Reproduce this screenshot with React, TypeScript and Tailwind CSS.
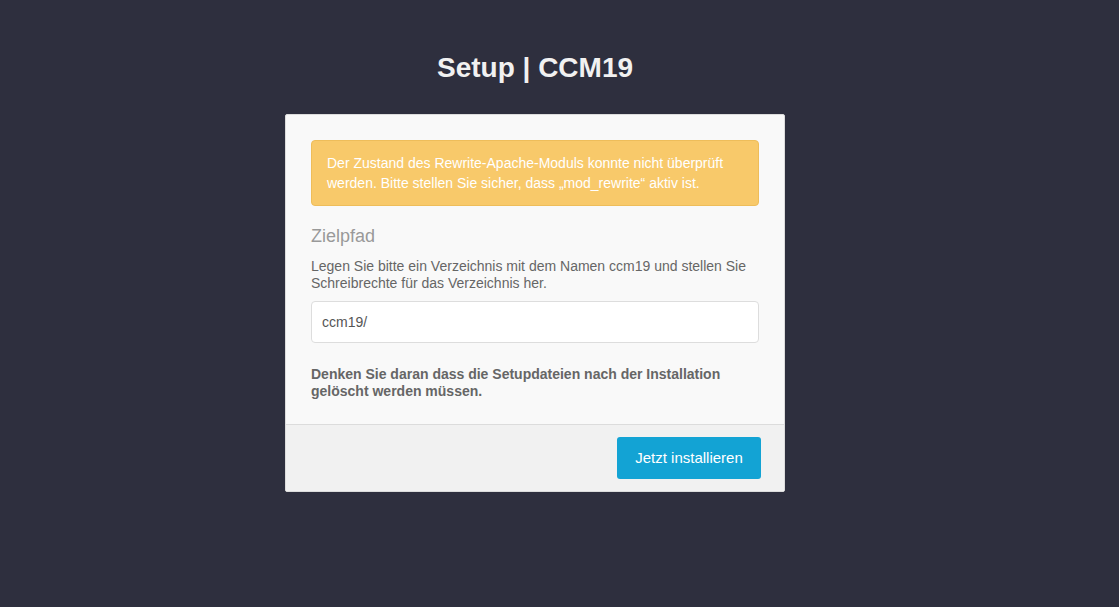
const App = () => {
  return (
    <div
      className="min-h-[607px] w-full bg-[#2e2f3e] text-[14px] text-[#666]"
      style={{ fontFamily: '"Liberation Sans", Arial, sans-serif' }}
    >
      <div className="flex w-[1070px] flex-col items-center pt-[50px]">
        <h1 className="text-[28px] font-bold leading-[36px] text-[#f1f1f1]">
          Setup | CCM19
        </h1>

        <div className="mt-[28px] w-[500px] rounded-[2px] border border-[#dcdcdc] bg-[#f9f9f9]">
          <div className="px-[25px] pt-[25px] pb-[24px]">
            <div className="rounded-[4px] border border-[#eebd5a] bg-[#f8c96a] px-[15px] pt-[12px] pb-[12px] leading-[20px] text-white">
              Der Zustand des Rewrite-Apache-Moduls konnte nicht überprüft
              werden. Bitte stellen Sie sicher, dass „mod_rewrite“ aktiv ist.
            </div>

            <h2 className="mt-[18px] text-[18px] leading-[24px] text-[#999]">
              Zielpfad
            </h2>
            <p className="mt-[10px] leading-[17px] text-[#666]">
              Legen Sie bitte ein Verzeichnis mit dem Namen ccm19 und stellen Sie
              Schreibrechte für das Verzeichnis her.
            </p>
            <input
              type="text"
              defaultValue="ccm19/"
              className="mt-[9px] block h-[42px] w-full rounded-[4px] border border-[#dddddd] bg-white px-[10px] text-[14px] text-[#555] outline-none"
            />

            <p className="mt-[23px] font-bold leading-[17px] text-[#666]">
              Denken Sie daran dass die Setupdateien nach der Installation
              gelöscht werden müssen.
            </p>
          </div>

          <div className="flex justify-end border-t border-[#dcdcdc] bg-[#f1f1f1] px-[23px] py-[12px]">
            <button className="h-[42px] w-[144px] rounded-[3px] bg-[#13a3d4] text-[15px] text-white">
              Jetzt installieren
            </button>
          </div>
        </div>
      </div>
    </div>
  );
};

export default App;
